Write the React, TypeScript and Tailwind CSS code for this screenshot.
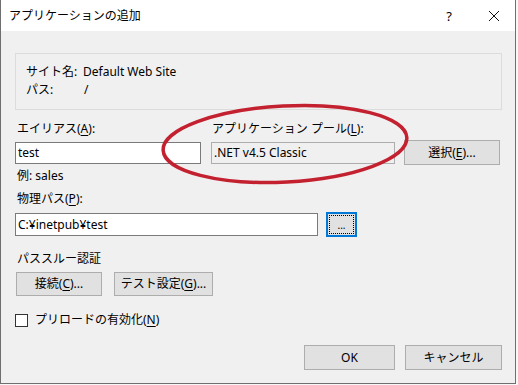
import React from "react";

const font = { fontFamily: '"Noto Sans", "Noto Sans CJK JP", sans-serif' };

function Btn({ children, className = "" }: { children: React.ReactNode; className?: string }) {
  return (
    <div className={"flex items-center justify-center border border-[#adadad] bg-[#e1e1e1] text-[12px] text-black " + className}>
      {children}
    </div>
  );
}

function U({ c }: { c: string }) {
  return <span className="underline underline-offset-2">{c}</span>;
}

export default function App() {
  return (
    <div className="relative h-[385px] w-[518px] overflow-hidden bg-[#f7f7f7] text-[12px] leading-[18px] text-black" style={font}>
      <div className="flex h-[384px] w-[516px] flex-col border-x border-b border-[#6f6f6f] bg-[#f0f0f0]">
        {/* title bar */}
        <div className="flex h-[31px] items-center bg-white pl-[8px]">
          <span className="text-[12px]">アプリケーションの追加</span>
          <div className="ml-auto flex items-center">
            <span className="mr-[36px] text-[13px]">?</span>
            <svg width="12" height="12" viewBox="0 0 12 12" className="mr-[15px]">
              <path d="M1 1 L11 11 M11 1 L1 11" stroke="#111" strokeWidth="1" />
            </svg>
          </div>
        </div>

        <div className="flex flex-col pl-[14px] pr-[13px]">
          {/* site group */}
          <div className="mt-[22px] h-[57px] border border-[#dcdcdc] pl-[10px] pt-[9px]">
            <div className="flex">
              <span className="w-[57px]">サイト名:</span>
              <span>Default Web Site</span>
            </div>
            <div className="flex">
              <span className="w-[57px]">パス:</span>
              <span className="pl-[1px]">/</span>
            </div>
          </div>

          {/* alias / pool */}
          <div className="mt-[10px] flex">
            <div className="flex w-[186px] flex-col">
              <span className="pl-[2px]">エイリアス(<U c="A" />):</span>
              <div className="mt-[4px] flex h-[22px] items-center border border-[#7a7a7a] bg-white pl-[2px]">test</div>
              <span className="mt-[3px] pl-[2px]">例: sales</span>
            </div>
            <div className="ml-[10px] flex w-[184px] flex-col">
              <span className="pl-[1px]">アプリケーション プール(<U c="L" />):</span>
              <div className="mt-[4px] flex h-[22px] items-center border border-[#adadad] bg-[#f0f0f0] pl-[2px]">.NET v4.5 Classic</div>
            </div>
            <Btn className="ml-[9px] mt-[20px] h-[25px] w-[96px]">
              選択(<U c="E" />)...
            </Btn>
          </div>

          {/* physical path */}
          <span className="mt-[5px] pl-[2px]">物理パス(<U c="P" />):</span>
          <div className="mt-[4px] flex items-center">
            <div className="flex h-[23px] w-[303px] items-center border border-[#7a7a7a] bg-white pl-[2px]">C:¥inetpub¥test</div>
            <div className="ml-[8px] flex h-[25px] w-[31px] items-center justify-center border-2 border-[#0078d7] bg-[#e1e1e1] p-[1px]">
              <div className="flex h-full w-full items-center justify-center border border-dotted border-black text-[10px] leading-none">...</div>
            </div>
          </div>

          {/* pass-through */}
          <span className="mt-[13px] pl-[2px]">パススルー認証</span>
          <div className="mt-[4px] flex">
            <Btn className="ml-[1px] h-[24px] w-[86px]">
              接続(<U c="C" />)...
            </Btn>
            <Btn className="ml-[12px] h-[24px] w-[99px]">
              テスト設定(<U c="G" />)...
            </Btn>
          </div>

          {/* preload */}
          <div className="mt-[15px] flex items-center">
            <div className="h-[13px] w-[13px] border border-[#333] bg-white" />
            <span className="ml-[7px]">プリロードの有効化(<U c="N" />)</span>
          </div>

          {/* ok/cancel */}
          <div className="mt-[16px] flex justify-end">
            <Btn className="h-[25px] w-[91px]">OK</Btn>
            <Btn className="ml-[10px] h-[25px] w-[97px]">キャンセル</Btn>
          </div>
        </div>
      </div>

      {/* red annotation */}
      <svg className="pointer-events-none absolute left-0 top-0" width="518" height="385">
        <ellipse cx="285" cy="144" rx="122" ry="38" transform="rotate(-3 285 144)" fill="none" stroke="#c3212f" strokeWidth="3.5" />
      </svg>
    </div>
  );
}
